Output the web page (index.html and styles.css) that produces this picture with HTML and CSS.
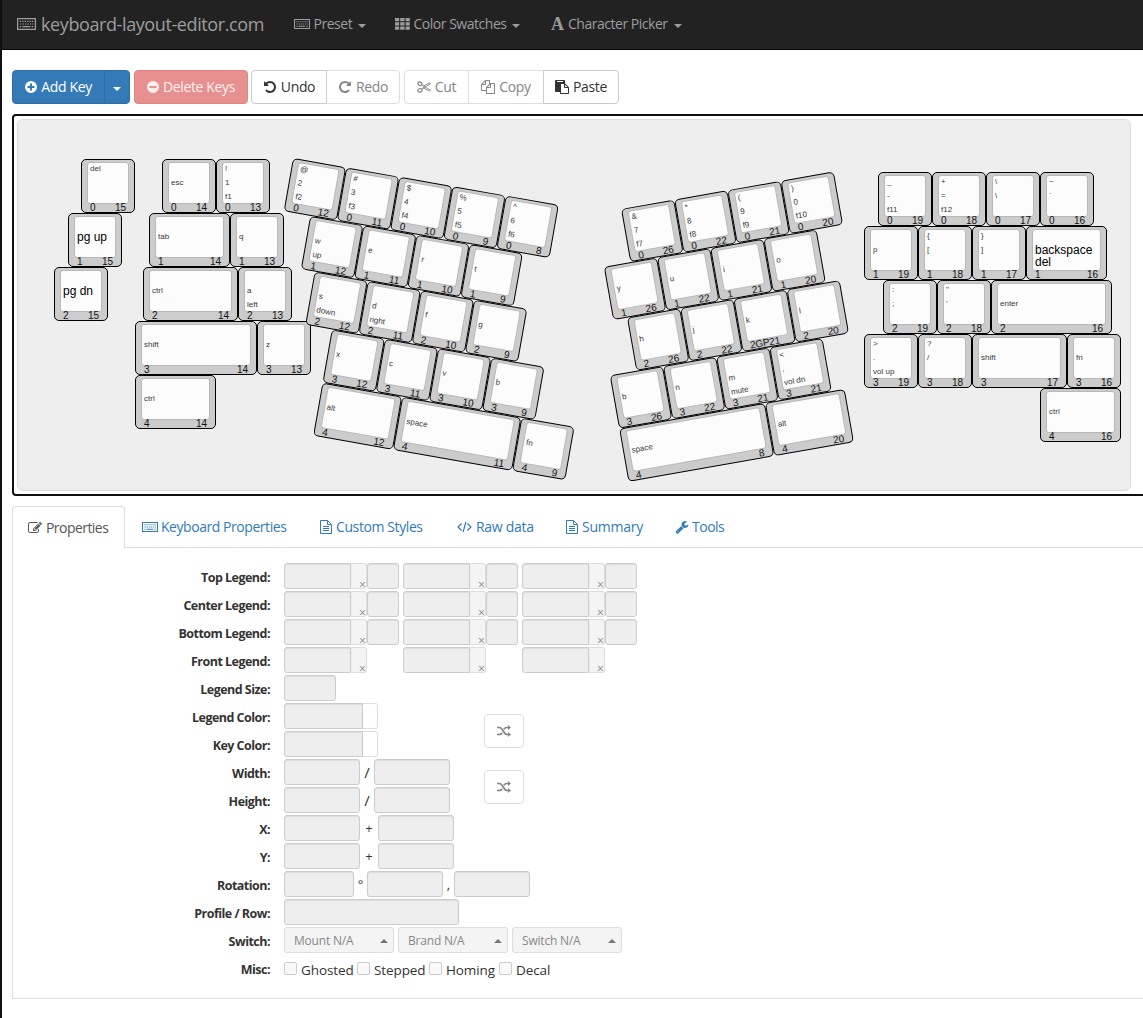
FILE: index.html
```html
<!DOCTYPE html>
<html lang="en">
<head>
<meta charset="utf-8">
<title>keyboard-layout-editor.com</title>
<link rel="stylesheet" href="styles.css">
</head>
<body>
<svg class="defs" width="0" height="0" aria-hidden="true">
  <symbol id="i-keyboard" viewBox="1 1 18 12" preserveAspectRatio="none"><path fill="none" stroke="currentColor" stroke-width="1.2" d="M1.600 1.600h16.800v10.800H1.600z"/><path stroke="currentColor" stroke-width="1.200" stroke-dasharray="1.300 1" d="M3.600 4.400h13M4 7h12.600"/><path stroke="currentColor" stroke-width="1.200" d="M3.600 9.600h1.300M6 9.600h7.600M14.800 9.600h1.600"/></symbol>
  <symbol id="i-th" viewBox="0 0 15 12"><path fill="currentColor" d="M0 0h4.2v3.2H0zM5.2 0h4.3v3.2H5.2zM10.6 0h4.2v3.2h-4.2zM0 4.3h4.2v3.2H0zM5.2 4.3h4.3v3.2H5.2zM10.6 4.3h4.2v3.2h-4.2zM0 8.6h4.2v3.2H0zM5.2 8.6h4.3v3.2H5.2zM10.6 8.6h4.2v3.2h-4.2z"/></symbol>
  <symbol id="i-plus" viewBox="0 0 12 12"><path fill="currentColor" fill-rule="evenodd" d="M6 0a6 6 0 1 0 0 12A6 6 0 0 0 6 0zM5 2.5h2V5h2.5v2H7v2.500H5V7H2.500V5H5z"/></symbol>
  <symbol id="i-minus" viewBox="0 0 12 12"><path fill="currentColor" fill-rule="evenodd" d="M6 0a6 6 0 1 0 0 12A6 6 0 0 0 6 0zM2.500 5h7v2h-7z"/></symbol>
  <symbol id="i-undo" viewBox="0 0 1792 1792"><path fill="currentColor" d="M1664 896q0 156-61 298t-164 245-245 164-298 61q-172 0-327-72.5t-264-204.500q-7-10-6.500-22.500t8.500-20.500l137-138q10-9 25-9 16 2 23 12 73 95 179 147t225 52q104 0 198.500-40.500t163.500-109.500 109.500-163.500 40.500-198.500-40.500-198.500-109.500-163.500-163.500-109.500-198.500-40.500q-98 0-188 35.500t-160 101.500l137 138q31 30 14 69-17 40-59 40h-448q-26 0-45-19t-19-45v-448q0-42 40-59 39-17 69 14l130 129q107-101 244.500-156.500t284.500-55.500q156 0 298 61t245 164 164 245 61 298z"/></symbol>
  <symbol id="i-cut" viewBox="0 0 14 14"><g fill="none" stroke="currentColor"><ellipse cx="2.900" cy="3.700" rx="2.100" ry="1.700" transform="rotate(25 2.900 3.700)" stroke-width="1.200"/><ellipse cx="2.900" cy="10.300" rx="2.100" ry="1.700" transform="rotate(-25 2.900 10.300)" stroke-width="1.200"/><path stroke-width=".9" d="M4.700 4.800 13.400 10.300 12 10.900 5.800 7.600M4.700 9.200 13.400 3.700 12 3.100 5.800 6.400"/></g></symbol>
  <symbol id="i-copy" viewBox="0 0 1792 1792"><path fill="currentColor" d="M1696 384q40 0 68 28t28 68v1216q0 40-28 68t-68 28h-960q-40 0-68-28t-28-68v-288h-544q-40 0-68-28t-28-68v-672q0-40 20-88t48-76l408-408q28-28 76-48t88-20h416q40 0 68 28t28 68v328q68-40 128-40h416zm-544 213l-299 299h299v-299zm-640-384l-299 299h299v-299zm196 647l316-316v-416h-384v416q0 40-28 68t-68 28h-416v640h512v-256q0-40 20-88t48-76zm956 804v-1152h-384v416q0 40-28 68t-68 28h-416v640h896z"/></symbol>
  <symbol id="i-paste" viewBox="0 0 1792 1792"><path fill="currentColor" d="M768 1664h896v-640h-416q-40 0-68-28t-28-68v-416h-384v1152zm256-1440v-64q0-13-9.500-22.500t-22.500-9.500h-704q-13 0-22.500 9.500t-9.500 22.500v64q0 13 9.500 22.500t22.500 9.500h704q13 0 22.500-9.500t9.500-22.500zm256 672h299l-299-299v299zm512 128v672q0 40-28 68t-68 28h-960q-40 0-68-28t-28-68v-160h-544q-40 0-68-28t-28-68v-1344q0-40 28-68t68-28h1088q40 0 68 28t28 68v328q21 13 36 28l408 408q28 28 48 76t20 88z"/></symbol>
  <symbol id="i-edit" viewBox="0 0 1792 1792"><path fill="currentColor" d="M888 1184l116-116-152-152-116 116v56h96v96h56zm440-720q-16-16-33 1l-350 350q-17 17-1 33t33-1l350-350q17-17 1-33zm80 594v190q0 119-84.500 203.500t-203.500 84.500h-832q-119 0-203.500-84.500t-84.500-203.500v-832q0-119 84.500-203.500t203.500-84.500h832q63 0 117 25 15 7 18 23 3 17-9 29l-49 49q-14 14-32 8-23-6-45-6h-832q-66 0-113 47t-47 113v832q0 66 47 113t113 47h832q66 0 113-47t47-113v-126q0-13 9-22l64-64q15-15 35-7t20 29zm-96-738l288 288-672 672h-288v-288zm444 132l-92 92-288-288 92-92q28-28 68-28t68 28l152 152q28 28 28 68t-28 68z"/></symbol>
  <symbol id="i-file" viewBox="0 0 12 14"><path fill="none" stroke="currentColor" d="M.5.500h7l4 4v9H.500zM7.500.500v4h4M3 6.500h6M3 8.500h6M3 10.500h6"/></symbol>
  <symbol id="i-code" viewBox="0 0 15 12"><path fill="none" stroke="currentColor" stroke-width="1.200" d="M4.600 2.500 1 6l3.600 3.500M10.400 2.500 14 6l-3.600 3.500M8.900 1 6.100 11"/></symbol>
  <symbol id="i-wrench" viewBox="0 0 1792 1792"><path fill="currentColor" d="M448 1472q0-26-19-45t-45-19-45 19-19 45 19 45 45 19 45-19 19-45zm644-420l-682 682q-37 37-90 37-52 0-91-37l-106-108q-38-36-38-90 0-53 38-91l681-681q39 98 114.500 173.500t173.500 114.500zm634-435q0 39-23 106-47 134-164.500 217.500t-258.500 83.500q-185 0-316.500-131.500t-131.500-316.500 131.500-316.500 316.500-131.500q58 0 121.500 16.500t107.500 46.500q16 11 16 28t-16 28l-293 169v224l193 107q5-3 79-48.500t135.500-81 70.500-35.500q15 0 23.500 10t8.500 25z"/></symbol>
  <symbol id="i-random" viewBox="0 0 14 12"><path fill="none" stroke="currentColor" stroke-width="1.700" d="M0 2.500h2.500C6 2.500 6.500 9.500 10 9.500h1.500M0 9.500h2.500c1.300 0 2-.8 2.600-1.800M6.800 4.300C7.500 3.200 8.400 2.500 10 2.500h1.500"/><path fill="currentColor" d="M11 0l3 2.500L11 5zM11 7l3 2.500L11 12z"/></symbol>
</svg>
<div class="page">
  <nav class="navbar">
    <a class="brand"><svg class="ico-kb-lg"><use href="#i-keyboard"/></svg><span>keyboard-layout-editor.com</span></a>
    <a class="menu menu-preset"><svg class="ico-kb"><use href="#i-keyboard"/></svg><span>Preset</span><i class="caret"></i></a>
    <a class="menu menu-color"><svg class="ico-th"><use href="#i-th"/></svg><span>Color Swatches</span><i class="caret"></i></a>
    <a class="menu menu-char"><b class="ico-a">A</b><span>Character Picker</span><i class="caret"></i></a>
  </nav>

  <div class="toolbar">
    <div class="btn-group">
      <button class="btn primary add"><svg class="ico-12"><use href="#i-plus"/></svg><span>Add Key</span></button>
      <button class="btn primary drop"><i class="caret"></i></button>
    </div>
    <button class="btn danger"><svg class="ico-12"><use href="#i-minus"/></svg><span>Delete Keys</span></button>
    <div class="btn-group history">
      <button class="btn undo"><svg class="ico"><use href="#i-undo"/></svg><span>Undo</span></button>
      <button class="btn redo off"><svg class="ico flip"><use href="#i-undo"/></svg><span>Redo</span></button>
    </div>
    <div class="btn-group">
      <button class="btn cut off"><svg class="ico"><use href="#i-cut"/></svg><span>Cut</span></button>
      <button class="btn copy off"><svg class="ico"><use href="#i-copy"/></svg><span>Copy</span></button>
      <button class="btn paste"><svg class="ico"><use href="#i-paste"/></svg><span>Paste</span></button>
    </div>
  </div>

  <div class="board-frame"><div class="board" id="board"></div></div>

  <ul class="tabs">
    <li class="tab active"><svg class="ico"><use href="#i-edit"/></svg><span>Properties</span></li>
    <li class="tab t-kb"><svg class="ico-kb"><use href="#i-keyboard"/></svg><span>Keyboard Properties</span></li>
    <li class="tab t-css"><svg class="ico-file"><use href="#i-file"/></svg><span>Custom Styles</span></li>
    <li class="tab t-raw"><svg class="ico-code"><use href="#i-code"/></svg><span>Raw data</span></li>
    <li class="tab t-sum"><svg class="ico-file"><use href="#i-file"/></svg><span>Summary</span></li>
    <li class="tab t-tools"><svg class="ico"><use href="#i-wrench"/></svg><span>Tools</span></li>
  </ul>

  <div class="panel">
    <div class="row"><label>Top Legend:</label>
      <div class="legend"><i class="field"></i><i class="clear">×</i><i class="swatch"></i></div>
      <div class="legend"><i class="field"></i><i class="clear">×</i><i class="swatch"></i></div>
      <div class="legend"><i class="field"></i><i class="clear">×</i><i class="swatch"></i></div></div>
    <div class="row"><label>Center Legend:</label>
      <div class="legend"><i class="field"></i><i class="clear">×</i><i class="swatch"></i></div>
      <div class="legend"><i class="field"></i><i class="clear">×</i><i class="swatch"></i></div>
      <div class="legend"><i class="field"></i><i class="clear">×</i><i class="swatch"></i></div></div>
    <div class="row"><label>Bottom Legend:</label>
      <div class="legend"><i class="field"></i><i class="clear">×</i><i class="swatch"></i></div>
      <div class="legend"><i class="field"></i><i class="clear">×</i><i class="swatch"></i></div>
      <div class="legend"><i class="field"></i><i class="clear">×</i><i class="swatch"></i></div></div>
    <div class="row"><label>Front Legend:</label>
      <div class="legend"><i class="field"></i><i class="clear">×</i></div>
      <div class="legend"><i class="field"></i><i class="clear">×</i></div>
      <div class="legend"><i class="field"></i><i class="clear">×</i></div></div>
    <div class="row"><label>Legend Size:</label><i class="field w52"></i></div>
    <div class="pair">
      <div class="pair-rows">
        <div class="row"><label>Legend Color:</label><i class="field joined w79"></i><i class="sample"></i></div>
        <div class="row"><label>Key Color:</label><i class="field joined w79"></i><i class="sample"></i></div>
      </div>
      <button class="btn off swap"><svg class="ico-random"><use href="#i-random"/></svg></button>
    </div>
    <div class="pair">
      <div class="pair-rows">
        <div class="row"><label>Width:</label><i class="field w76"></i><span class="sep slash">/</span><i class="field w76"></i></div>
        <div class="row"><label>Height:</label><i class="field w76"></i><span class="sep slash">/</span><i class="field w76"></i></div>
      </div>
      <button class="btn off swap"><svg class="ico-random"><use href="#i-random"/></svg></button>
    </div>
    <div class="row"><label>X:</label><i class="field w76"></i><span class="sep plus">+</span><i class="field w76"></i></div>
    <div class="row"><label>Y:</label><i class="field w76"></i><span class="sep plus">+</span><i class="field w76"></i></div>
    <div class="row"><label>Rotation:</label><i class="field w70"></i><span class="sep deg">°</span><i class="field w76"></i><span class="sep comma">,</span><i class="field w76"></i></div>
    <div class="row"><label>Profile / Row:</label><i class="field w175"></i></div>
    <div class="row"><label>Switch:</label>
      <div class="select"><span>Mount N/A</span><i class="caret up"></i></div>
      <div class="select"><span>Brand N/A</span><i class="caret up"></i></div>
      <div class="select"><span>Switch N/A</span><i class="caret up"></i></div></div>
    <div class="row misc"><label>Misc:</label>
      <span class="check c1"><i class="box"></i>Ghosted</span>
      <span class="check c2"><i class="box"></i>Stepped</span>
      <span class="check c3"><i class="box"></i>Homing</span>
      <span class="check"><i class="box"></i>Decal</span></div>
  </div>
</div>
<script src="keys.js"></script>
</body>
</html>
```
FILE: styles.css
```css
* { box-sizing: border-box; }
body { margin: 0; background: #fff; color: #333; font: 14px/20px "Open Sans", "Noto Sans", sans-serif; height: 1018px; overflow: hidden; }
i, b { font-style: normal; }
svg { display: block; flex: none; }
.defs { position: absolute; }
.page { height: 1018px; border-left: 2px solid #101014; overflow: hidden; }
.page > * { width: 1200px; }

.navbar { display: flex; align-items: center; height: 50px; padding: 0 0 1px 15px; background: #222; border-bottom: 1px solid #080808; color: #9d9d9d; }
.brand { display: flex; align-items: center; gap: 5px; width: 277px; font-size: 18px; letter-spacing: -0.4px; white-space: nowrap; }
.menu { display: flex; align-items: center; white-space: nowrap; letter-spacing: -0.48px; }
.menu-preset { width: 101px; }
.menu-color { width: 156px; }
.menu span { margin-left: 4px; }
.menu-preset span, .menu-color span { margin-left: 3.500px; }
.ico-kb-lg { width: 19px; height: 12px; }
.ico-kb { width: 16px; height: 10px; }
.ico-th { width: 15px; height: 12px; }
.ico-a { width: 13px; font: bold 18px/20px "Liberation Serif", serif; }
.caret { width: 0; height: 0; border: 4px solid transparent; border-top-color: currentColor; border-bottom: 0; margin-left: 6px; margin-top: 3px; }
.caret.up { border-top: 0; border-bottom: 4px solid currentColor; margin-top: 0; }

.toolbar { display: flex; padding: 20px 0 0 10px; height: 64px; }
.btn-group { display: flex; }
.btn { display: flex; align-items: center; justify-content: center; gap: 4px; height: 34px; padding: 0; border: 1px solid #ccc; border-radius: 4px; background: #fff; color: #333; font: inherit; letter-spacing: -0.35px; white-space: nowrap; }
.btn + .btn { border-top-left-radius: 0; border-bottom-left-radius: 0; margin-left: -1px; }
.btn:not(:last-child) { border-top-right-radius: 0; border-bottom-right-radius: 0; }
.btn.primary { background: #337ab7; border-color: #2e6da4; color: #fff; }
.add { width: 93px; }
.drop { width: 26px; }
.drop .caret { margin-left: 0; }
.toolbar > .danger { width: 114px; margin: 0 3px 0 4px; border-radius: 4px; background: #e79090; border-color: #e38383; color: #fcefee; }
.history { margin-right: 4px; }
.btn.off { color: #858585; border-color: #ddd; }
.undo { width: 76px; z-index: 1; }
.redo { width: 74px; }
.cut { width: 65px; }
.copy { width: 76px; }
.paste { width: 76px; }
.ico { width: 14px; height: 14px; }
.ico-12 { width: 12px; height: 12px; }
.ico-file { width: 12px; height: 14px; }
.ico-code { width: 15px; height: 12px; }
.ico-random { width: 14px; height: 12px; }
.flip { transform: scaleX(-1); }

.page > .board-frame { height: 382px; width: 1180px; margin-left: 10px; border: 2px solid #101014; border-radius: 4px; padding: 3px; }
.board { position: relative; width: 1114px; height: 372px; background: #eee; border: 1px solid #ddd; border-radius: 6px; }
.cluster { position: absolute; transform-origin: 0 0; }
.key { position: absolute; height: 54px; border: 1px solid #000; border-radius: 5px; background: #ccc; font: 8px/10px "Liberation Sans", Arial, sans-serif; color: #3a3a3a; }
.cap { position: absolute; left: 5px; right: 5px; top: 2px; height: 42px; border: 1px solid #b8b8b8; border-radius: 3px; background: #fcfcfc; }
.lg { position: absolute; left: 8px; white-space: nowrap; }
.lg.r0 { top: 4px; }
.lg.r1 { top: 18px; }
.lg.r2 { top: 32px; }
.key.large .lg { font-size: 12px; line-height: 12px; color: #000; }
.key.large .lg.r1 { top: 17px; }
.front { position: absolute; left: 8px; right: 8px; top: 42px; display: flex; justify-content: space-between; font-size: 10px; line-height: 12px; color: #111; }
.front.full { justify-content: flex-start; letter-spacing: -0.2px; }

.tabs { display: flex; list-style: none; margin: 10px 0 0 10px; padding: 0; height: 42px; border-bottom: 1px solid #ddd; color: #337ab7; letter-spacing: -0.4px; }
.tab { display: flex; align-items: center; gap: 4px; height: 42px; padding-left: 16px; white-space: nowrap; }
.tab.active { width: 113px; margin-right: 2px; padding-left: 15px; background: #fff; border: 1px solid #ddd; border-bottom: 0; border-radius: 4px 4px 0 0; color: #555; letter-spacing: -0.55px; }
.t-kb { width: 177px; padding-left: 15px; gap: 3px; letter-spacing: -0.45px; }
.t-css { width: 137px; }
.t-raw { width: 109px; letter-spacing: -0.3px; }
.t-sum { width: 109px; letter-spacing: -0.25px; }
.t-tools { gap: 3px; letter-spacing: -0.5px; }

.panel { margin-left: 10px; height: 451px; padding-top: 15px; border: 1px solid #ddd; border-top: 0; }
.row { display: flex; height: 28px; }
label { flex: none; width: 257px; margin-right: 14px; padding-top: 5px; text-align: right; font-weight: bold; font-size: 12.500px; letter-spacing: -0.52px; }
.field, .swatch { flex: none; height: 26px; border: 1px solid #ccc; border-radius: 3px; background: #eee; box-shadow: inset 0 1px 1px rgba(0,0,0,.075); }
.legend { display: flex; width: 119px; }
.legend .field { width: 67px; border-radius: 3px 0 0 3px; }
.clear { display: flex; align-items: center; width: 16px; height: 26px; padding: 18px 0 0 7px; border: 1px solid #ddd; border-left-color: #eee; border-radius: 0 3px 3px 0; background: #f4f4f4; color: #888; font-size: 12px; line-height: 12px; }
.swatch { width: 32px; }
.joined { border-radius: 3px 0 0 3px; }
.sample { width: 15px; height: 26px; border: 1px solid #ddd; border-left: 0; border-radius: 0 3px 3px 0; }
.w52 { width: 52px; }
.w70 { width: 70px; }
.w76 { width: 76px; }
.w79 { width: 79px; }
.w175 { width: 175px; }
.pair { display: flex; align-items: center; height: 56px; }
.pair-rows { width: 471px; }
.swap { width: 40px; }
.sep { text-align: center; padding-top: 3px; font-size: 13px; }
.slash { width: 14px; font-size: 15px; }
.plus { width: 18px; }
.deg { width: 13px; }
.comma { width: 11px; }
.select { display: flex; align-items: center; justify-content: space-between; width: 110px; height: 26px; margin-right: 4px; padding: 1px 5px 0 9px; border: 1px solid #ddd; border-radius: 3px; background: #f4f4f4; color: #888; font-size: 12px; letter-spacing: -0.2px; }
.select .caret { color: #777; }
.check { display: flex; height: 28px; padding-top: 5px; font-size: 13.500px; letter-spacing: -0.1px; }
.box { width: 13px; height: 13px; margin: 2px 4px 0 0; border: 1px solid #ccc; border-radius: 2px; background: #f9f9f9; }
.c1 { width: 73px; }
.c2 { width: 72px; }
.c3 { width: 70px; }
```
FILE: keys.js
```js
// Cluster: origin on the board, rotation in degrees, then keys as
// [x, y, width, top, middle, bottom, front left, front right, front middle]
const clusters = [
  { x: 54, y: 159, r: 0, keys: [
    [27, 0, 54, 'del', '', '', 0, 15],
    [14, 54, 54, '', 'pg up', '', 1, 15],
    [0, 108, 54, '', 'pg dn', '', 2, 15],
    [108, 0, 54, '', 'esc', '', 0, 14],
    [162, 0, 54, '!', '1', 'f1', 0, 13],
    [95, 54, 81, '', 'tab', '', 1, 14],
    [176, 54, 54, '', 'q', '', 1, 13],
    [89, 108, 95, '', 'ctrl', '', 2, 14],
    [184, 108, 54, '', 'a', 'left', 2, 13],
    [81, 162, 122, '', 'shift', '', 3, 14],
    [203, 162, 54, '', 'z', '', 3, 13],
    [81, 216, 81, '', 'ctrl', '', 4, 14]
  ] },
  { x: 292.8, y: 158, r: 10, keys: [
    [0, 0, 54, '@', '2', 'f2', 0, 12],
    [54, 0, 54, '#', '3', 'f3', 0, 11],
    [108, 0, 54, '$', '4', 'f4', 0, 10],
    [162, 0, 54, '%', '5', 'f5', 0, 9],
    [216, 0, 54, '^', '6', 'f6', 0, 8],
    [27, 54, 54, '', 'w', 'up', 1, 12],
    [81, 54, 54, '', 'e', '', 1, 11],
    [135, 54, 54, '', 'r', '', 1, 10],
    [189, 54, 54, '', 't', '', 1, 9],
    [40.5, 108, 54, '', 's', 'down', 2, 12],
    [94.5, 108, 54, '', 'd', 'right', 2, 11],
    [148.5, 108, 54, '', 'f', '', 2, 10],
    [202.5, 108, 54, '', 'g', '', 2, 9],
    [67.5, 162, 54, '', 'x', '', 3, 12],
    [121.5, 162, 54, '', 'c', '', 3, 11],
    [175.5, 162, 54, '', 'v', '', 3, 10],
    [229.5, 162, 54, '', 'b', '', 3, 9],
    [67.5, 216, 81, '', 'alt', '', 4, 12],
    [148.5, 216, 121.5, '', 'space', '', 4, 11],
    [270, 216, 54, '', 'fn', '', 4, 9]
  ] },
  { x: 620.8, y: 208.5, r: -10, keys: [
    [0, 0, 54, '&', '7', 'f7', 0, 26],
    [54, 0, 54, '*', '8', 'f8', 0, 22],
    [108, 0, 54, '(', '9', 'f9', 0, 21],
    [162, 0, 54, ')', '0', 'f10', 0, 20],
    [-27, 54, 54, '', 'y', '', 1, 26],
    [27, 54, 54, '', 'u', '', 1, 22],
    [81, 54, 54, '', 'i', '', 1, 21],
    [135, 54, 54, '', 'o', '', 1, 20],
    [-13.5, 108, 54, '', 'h', '', 2, 26],
    [40.5, 108, 54, '', 'j', '', 2, 22],
    [94.5, 108, 54, '', 'k', '', 2, 21, 'GP'],
    [148.5, 108, 54, '', 'l', '', 2, 20],
    [-40.5, 162, 54, '', 'b', '', 3, 26],
    [13.5, 162, 54, '', 'n', '', 3, 22],
    [67.5, 162, 54, '', 'm', 'mute', 3, 21],
    [121.5, 162, 54, '<', ',', 'vol dn', 3, 21],
    [-40.5, 216, 148.5, '', 'space', '', 4, 8],
    [108, 216, 81, '', 'alt', '', 4, 20]
  ] },
  { x: 864, y: 172, r: 0, keys: [
    [14, 0, 54, '_', '-', 'f11', 0, 19],
    [68, 0, 54, '+', '=', 'f12', 0, 18],
    [122, 0, 54, '\\', '\\', '', 0, 17],
    [176, 0, 54, '~', '`', '', 0, 16],
    [0, 54, 54, '', 'p', '', 1, 19],
    [54, 54, 54, '{', '[', '', 1, 18],
    [108, 54, 54, '}', ']', '', 1, 17],
    [162, 54, 81, '', 'backspace\ndel', '', 1, 16],
    [19, 108, 54, ':', ';', '', 2, 19],
    [73, 108, 54, '"', "'", '', 2, 18],
    [127, 108, 121, '', 'enter', '', 2, 16],
    [0, 162, 54, '>', '.', 'vol up', 3, 19],
    [54, 162, 54, '?', '/', '', 3, 18],
    [108, 162, 95, '', 'shift', '', 3, 17],
    [203, 162, 54, '', 'fn', '', 3, 16],
    [176, 216, 81, '', 'ctrl', '', 4, 16]
  ] }
];
const large = ['pg up', 'pg dn', 'backspace\ndel'];
const board = document.getElementById('board');

function add(parent, cls, text) {
  const el = document.createElement('div');
  el.className = cls;
  if (text !== undefined) el.innerText = text;
  parent.appendChild(el);
  return el;
}

for (const c of clusters) {
  const g = add(board, 'cluster');
  g.style.left = c.x - 18 + 'px';
  g.style.top = c.y - 120 + 'px';
  if (c.r) g.style.transform = `rotate(${c.r}deg)`;
  for (const [x, y, w, top, mid, bot, fl, fr, fm] of c.keys) {
    const k = add(g, 'key' + (large.includes(mid) ? ' large' : ''));
    k.style.left = x + 'px';
    k.style.top = y + 'px';
    k.style.width = w + 'px';
    add(k, 'cap');
    [top, mid, bot].forEach((t, i) => { if (t) add(k, 'lg r' + i, t); });
    const f = add(k, fm ? 'front full' : 'front');
    for (const t of [fl, fm, fr]) if (t !== undefined) add(f, 'num', String(t));
  }
}
```
